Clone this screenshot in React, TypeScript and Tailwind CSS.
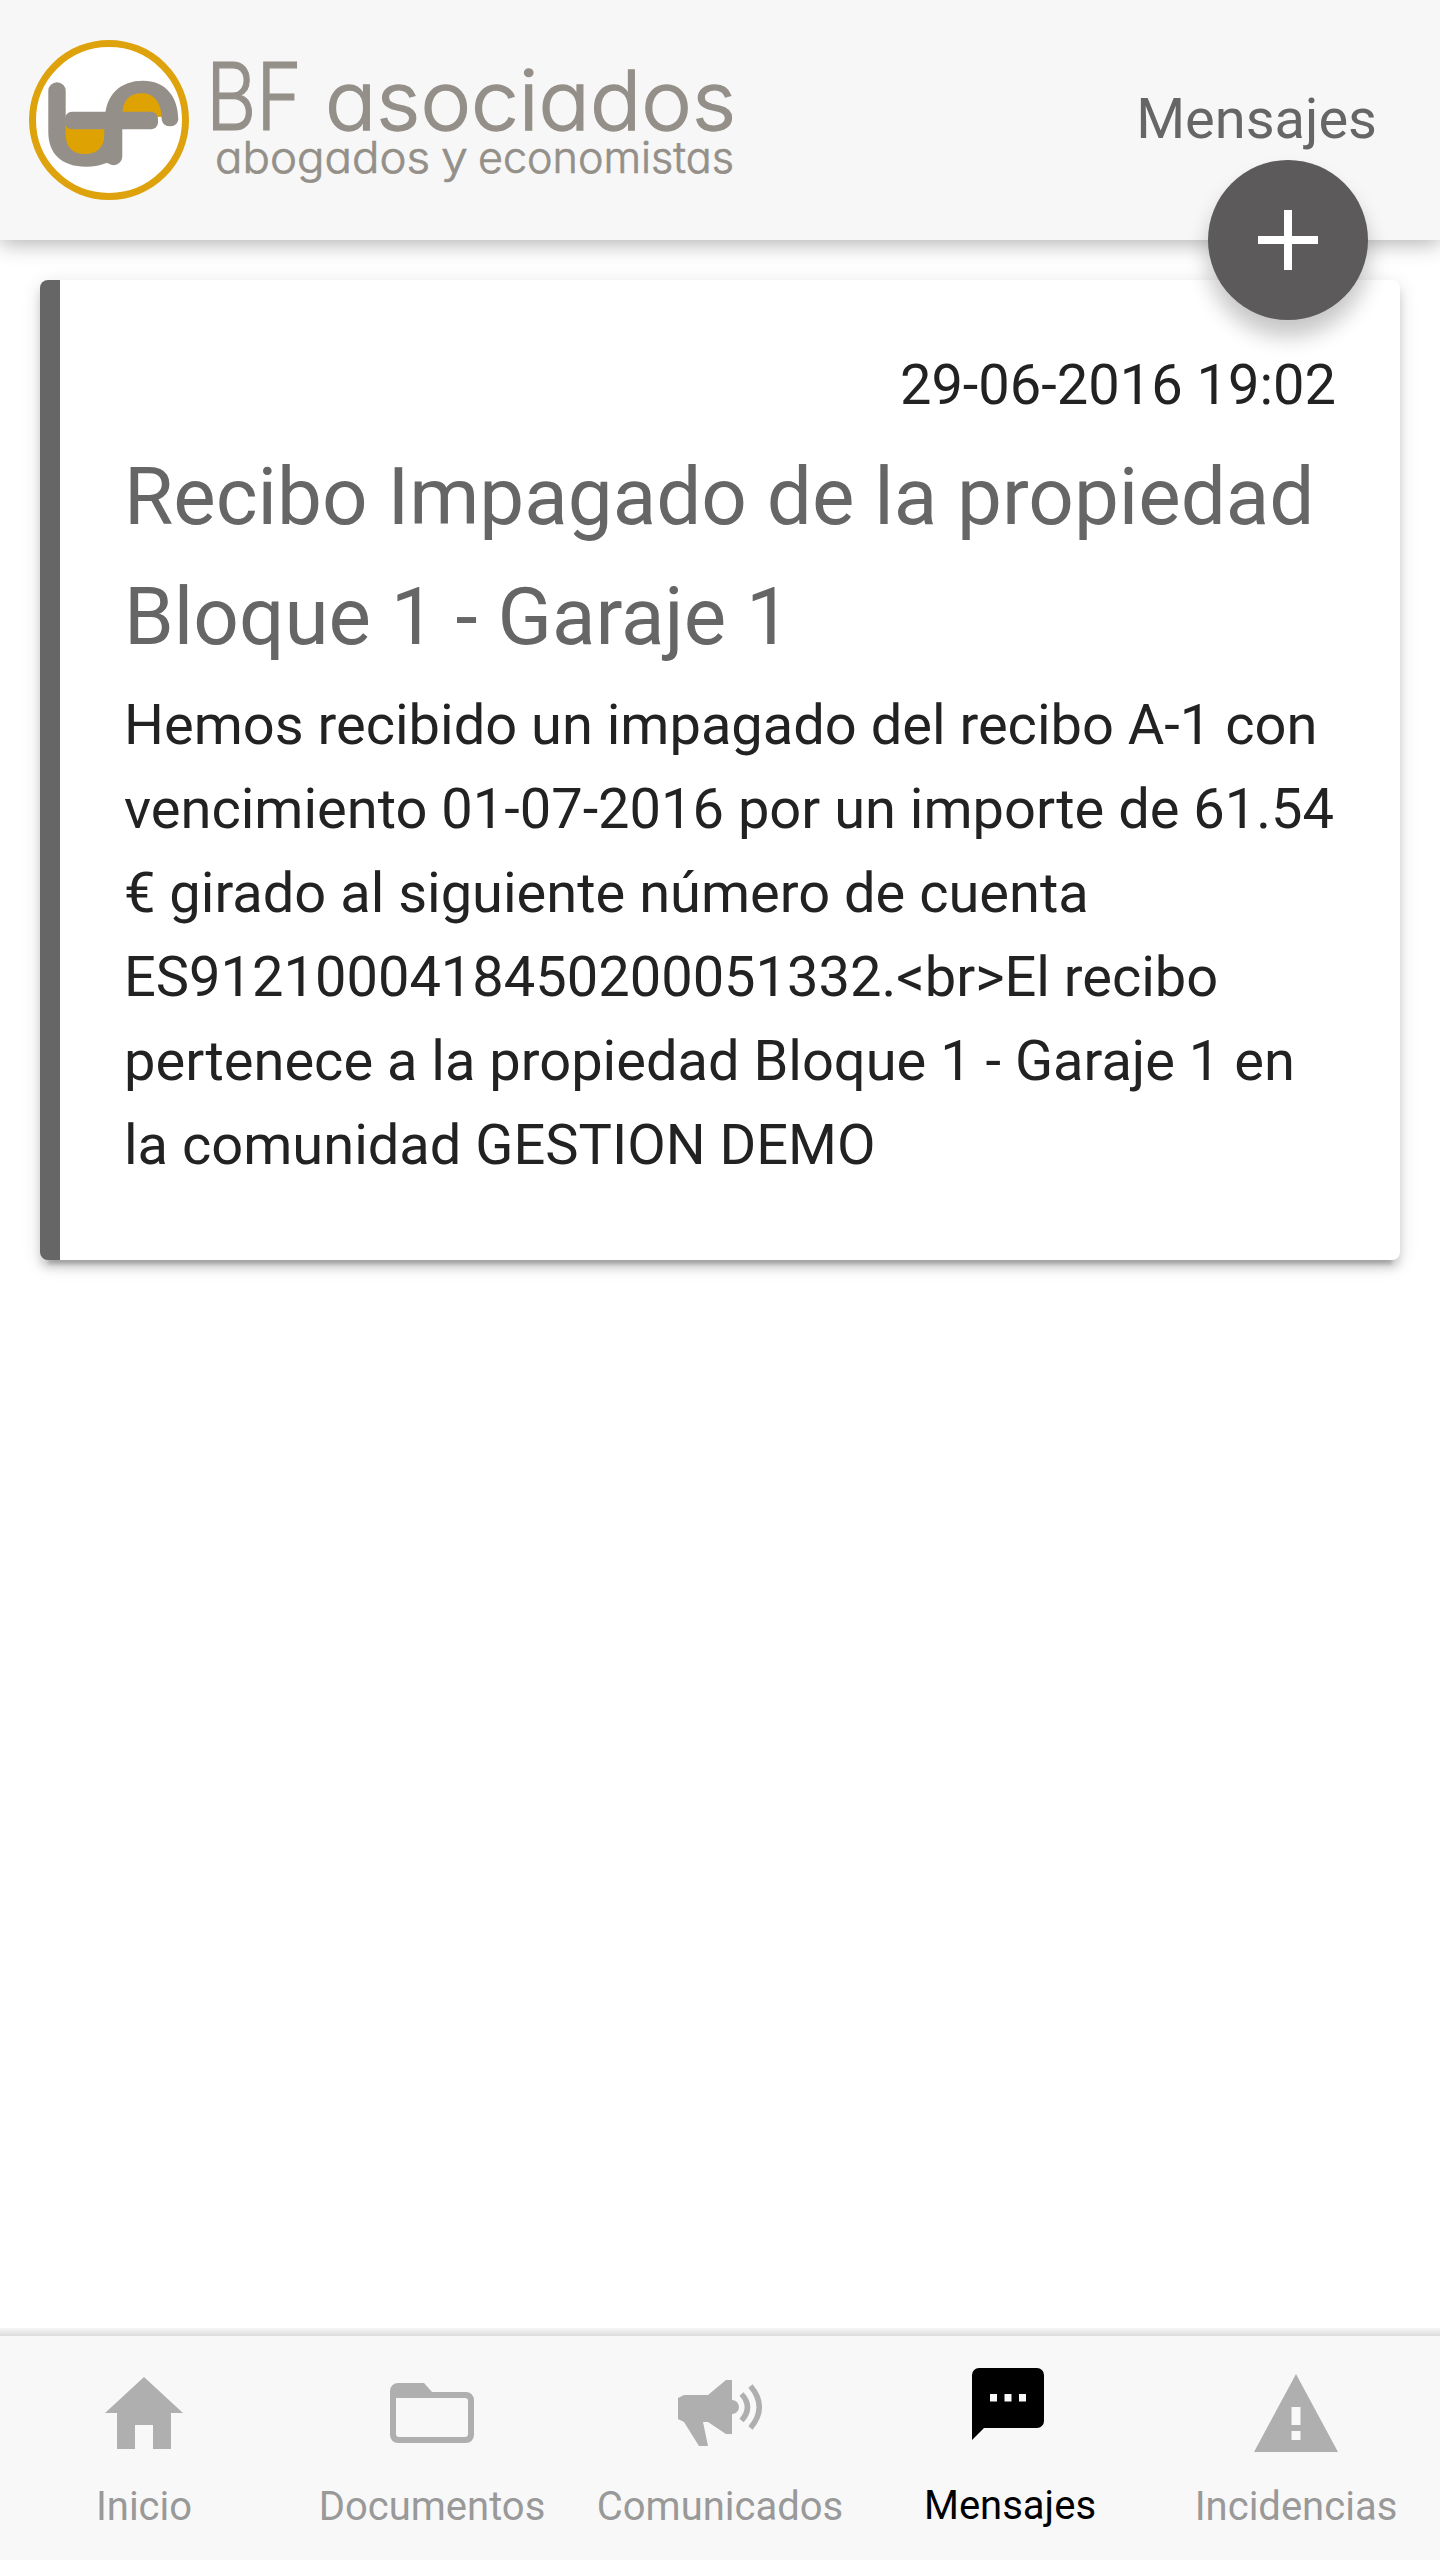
import type { ReactNode } from 'react'

interface TabProps {
  label: string
  active?: boolean
  children: ReactNode
}

const Logo = () => (
  <svg className="block h-40 w-[710px] overflow-visible" viewBox="0 0 710 160" role="img" aria-label="BF asociados">
    <circle cx="80" cy="80" r="76.5" fill="#fff" stroke="#dea20c" strokeWidth="7" />
    <path d="M35 84h42v18q-4 14-20 14t-22-16z" fill="#dfa203" />
    <path d="M92 76c0-16 8-24 20-24s22 8 22 25z" fill="#dfa203" />
    <g fill="#949089">
      <path d="M19.300 51a8.700 8.700 0 0 1 17.400 0V95c0 12 7 19 19.300 19s19.300-7 19.300-19V80h10v42q-5 2-8 1-8 3.700-20.300 3.700C33 126.700 19.300 114 19.300 92z" />
      <path d="M76 80c0-26 16-39.300 38-39.300S149.300 56 149.300 80a8.600 8.600 0 0 1-16.600 0c0-17-7-26.700-20-26.700S93.300 61 93.300 76v40.500a8.650 8.650 0 0 1-17.300 0z" />
      <rect x="36" y="71.700" width="93" height="17.600" rx="7" />
    </g>
    <g
      fill="#949089"
      stroke="#949089"
      className="font-['Inter',sans-serif] [font-feature-settings:'cv11'_1]"
    >
      <g fontSize="94" fontWeight="300" strokeWidth="1.2">
        <text x="177" y="90" textLength="96" lengthAdjust="spacingAndGlyphs">BF</text>
      </g>
      <g fontSize="82" fontWeight="300" strokeWidth="1.4">
        <text x="296" y="90" textLength="411" lengthAdjust="spacingAndGlyphs">asociados</text>
      </g>
      <g fontSize="44" fontWeight="300" strokeWidth="0.7">
        <text x="186" y="133" textLength="215" lengthAdjust="spacingAndGlyphs">abogados</text>
        <text x="412" y="133" textLength="27" lengthAdjust="spacingAndGlyphs">y</text>
        <text x="449" y="133" textLength="256" lengthAdjust="spacingAndGlyphs">economistas</text>
      </g>
    </g>
  </svg>
)

const Header = () => {
  return (
    <header className="relative z-10 flex h-60 shrink-0 items-center justify-between bg-[#f7f7f7] pr-[63px] pl-[29px] shadow-[0_4px_20px_rgba(0,0,0,0.3)]">
      <Logo />
      <h1 className="pb-[3px] text-[56px] leading-none font-normal text-[#666]">Mensajes</h1>
      <button
        type="button"
        aria-label="Nuevo mensaje"
        className="absolute right-[72px] -bottom-20 flex size-40 items-center justify-center rounded-full bg-[#5c5a5b] shadow-[0_16px_24px_rgba(0,0,0,0.14),0_16px_20px_rgba(0,0,0,0.1)]"
      >
        <svg className="size-[60px]" viewBox="0 0 60 60" fill="#fff">
          <path d="M26 0h8v26h26v8H34v26h-8V34H0v-8h26z" />
        </svg>
      </button>
    </header>
  )
}

const MessageCard = () => {
  return (
    <article className="h-[980px] rounded-lg border-l-[20px] border-[#666] bg-white pt-[63px] pr-16 pl-16 shadow-[0_8px_8px_0_rgba(0,0,0,0.14),0_12px_4px_-8px_rgba(0,0,0,0.2),0_4px_20px_0_rgba(0,0,0,0.12)]">
      <p className="text-right text-[56px] leading-[84px]">29-06-2016 19:02</p>
      <h2 className="mt-[10px] text-[80px] leading-[120px] font-normal text-[#666]">
        Recibo Impagado de la propiedad Bloque 1 - Garaje 1
      </h2>
      <p className="mt-[6px] text-[56px] leading-[84px]">
        Hemos recibido un impagado del recibo A-1 con vencimiento 01-07-2016 por un importe de 61.54
        € girado al siguiente número de cuenta ES9121000418450200051332.&lt;br&gt;El recibo
        pertenece a la propiedad Bloque 1 - Garaje 1 en la comunidad GESTION DEMO
      </p>
    </article>
  )
}

const Tab = ({ label, active = false, children }: TabProps) => {
  return (
    <a
      className={
        active
          ? 'flex w-72 flex-col items-center text-black'
          : 'flex w-72 flex-col items-center text-[#999]'
      }
    >
      <svg
        className={active ? 'block h-[145px] w-72' : 'block h-[146px] w-72 text-[#afafaf]'}
        viewBox={active ? '0 0 288 145' : '0 0 288 146'}
        fill="currentColor"
      >
        {children}
      </svg>
      <span className={active ? 'pl-1 text-[40px] leading-[50px]' : 'text-[40px] leading-[50px]'}>
        {label}
      </span>
    </a>
  )
}

const TabBar = () => {
  return (
    <nav className="relative z-10 flex h-56 shrink-0 bg-[#f8f8f8]">
      <div className="absolute inset-x-0 -top-2 h-2 bg-linear-to-b from-[#f6f6f6] to-[#dcdcdc]" />
      <Tab label="Inicio">
        <path d="M144 41l39 36h-12v36h-18V89h-18v24h-18V77h-12z" />
      </Tab>
      <Tab label="Documentos">
        <path
          fillRule="evenodd"
          d="M110 47h26l8 9h34a8 8 0 0 1 8 8v35a8 8 0 0 1-8 8h-68a8 8 0 0 1-8-8V55a8 8 0 0 1 8-8zM108 62v36a3 3 0 0 0 3 3h66a3 3 0 0 0 3-3V65a3 3 0 0 0-3-3z"
        />
      </Tab>
      <Tab label="Comunicados">
        <path d="M102 62l6-3h24l18-15h6v20a7 7 0 0 1 0 14v20h-6l-18-12h-5l5 24h-9l-15-24-6-3z" />
        <g fill="none" stroke="currentColor" strokeWidth="5.500">
          <path d="M165.500 58q12 13 0 26.500" />
          <path d="M174.500 50q17.500 21 0 42" />
        </g>
      </Tab>
      <Tab label="Mensajes" active>
        <path
          fillRule="evenodd"
          d="M115 32h58a7 7 0 0 1 7 7v46a7 7 0 0 1-7 7h-53l-12 12V39a7 7 0 0 1 7-7zM126 58v7.500h7V58zM140.500 58v7.500h7V58zM155 58v7.500h7V58z"
        />
      </Tab>
      <Tab label="Incidencias">
        <path
          fillRule="evenodd"
          d="M144 38l42 78h-84zM139.500 71v18h9V71zM139.500 95v9h9v-9z"
        />
      </Tab>
    </nav>
  )
}

export default function App() {
  return (
    <div className="flex h-[2560px] w-[1440px] flex-col overflow-hidden bg-white font-['Roboto',sans-serif] text-[#222]">
      <Header />
      <main className="flex-1 p-10">
        <MessageCard />
      </main>
      <TabBar />
    </div>
  )
}
